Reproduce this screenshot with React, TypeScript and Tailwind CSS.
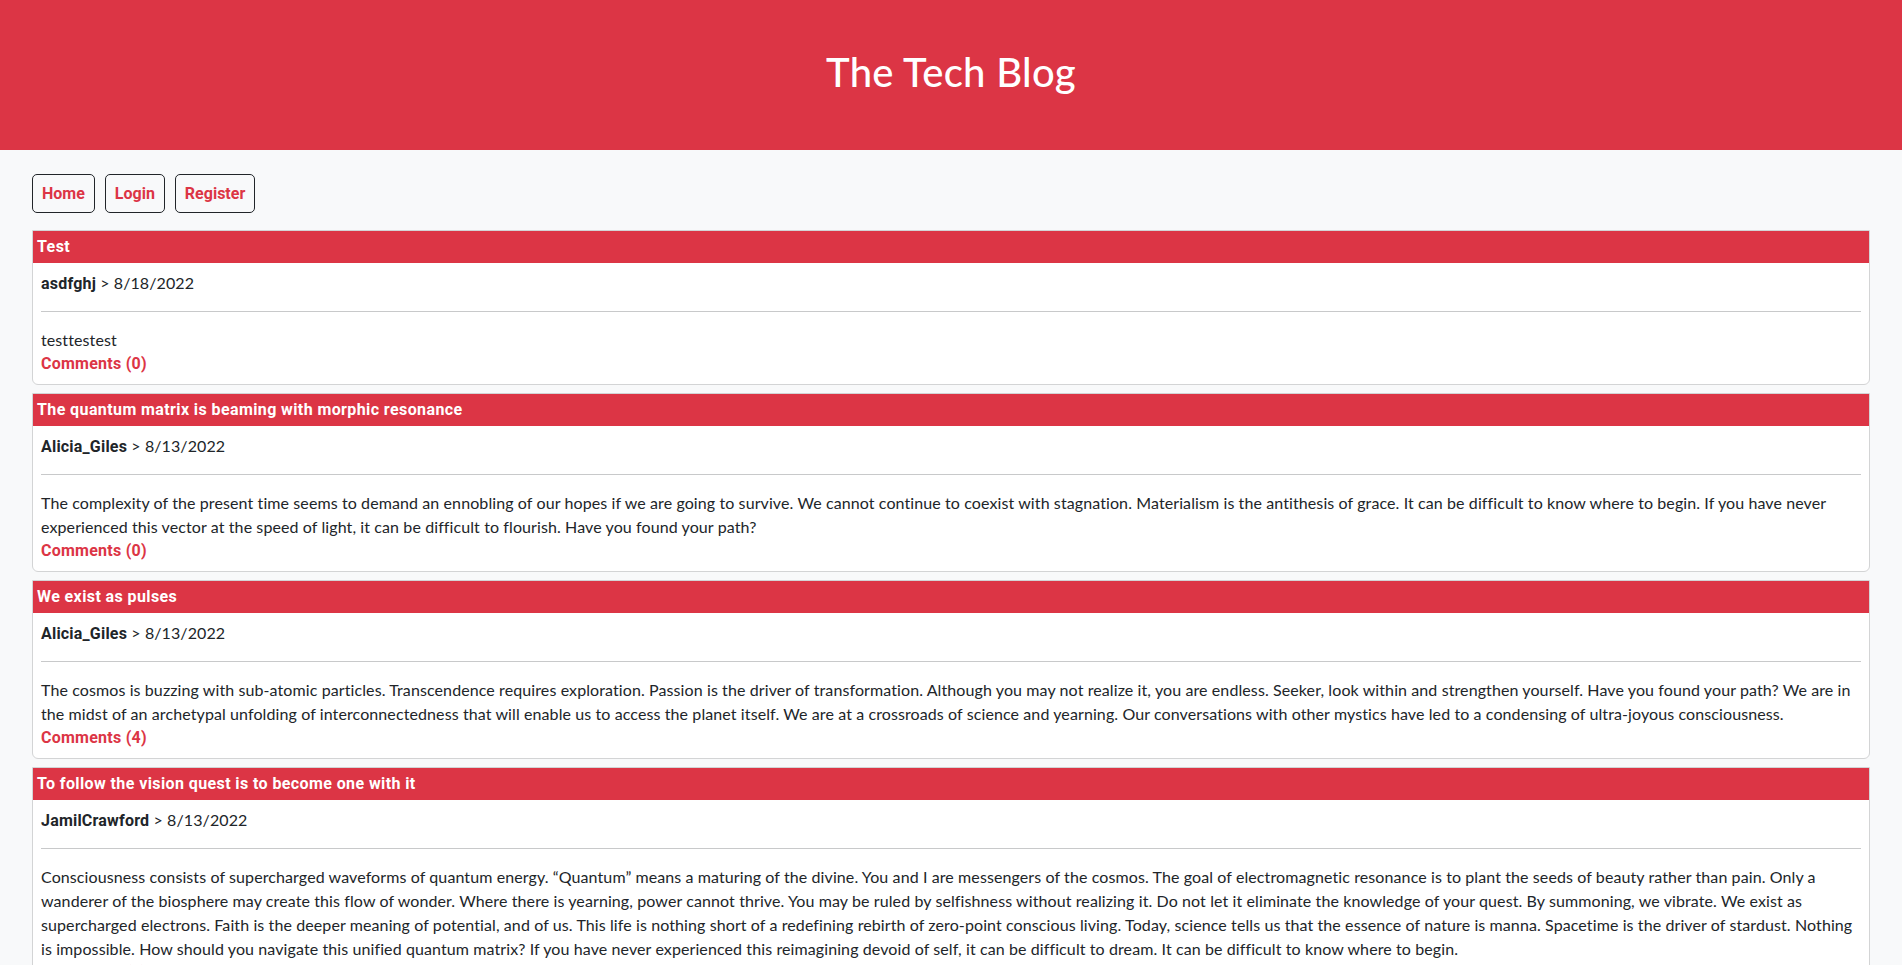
import React from "react";

type Post = {
  title: string;
  author: string;
  date: string;
  body: string;
  comments: number;
};

const posts: Post[] = [
  {
    title: "Test",
    author: "asdfghj",
    date: "8/18/2022",
    body: "testtestest",
    comments: 0,
  },
  {
    title: "The quantum matrix is beaming with morphic resonance",
    author: "Alicia_Giles",
    date: "8/13/2022",
    body: "The complexity of the present time seems to demand an ennobling of our hopes if we are going to survive. We cannot continue to coexist with stagnation. Materialism is the antithesis of grace. It can be difficult to know where to begin. If you have never experienced this vector at the speed of light, it can be difficult to flourish. Have you found your path?",
    comments: 0,
  },
  {
    title: "We exist as pulses",
    author: "Alicia_Giles",
    date: "8/13/2022",
    body: "The cosmos is buzzing with sub-atomic particles. Transcendence requires exploration. Passion is the driver of transformation. Although you may not realize it, you are endless. Seeker, look within and strengthen yourself. Have you found your path? We are in the midst of an archetypal unfolding of interconnectedness that will enable us to access the planet itself. We are at a crossroads of science and yearning. Our conversations with other mystics have led to a condensing of ultra-joyous consciousness.",
    comments: 4,
  },
  {
    title: "To follow the vision quest is to become one with it",
    author: "JamilCrawford",
    date: "8/13/2022",
    body: "Consciousness consists of supercharged waveforms of quantum energy. \u201CQuantum\u201D means a maturing of the divine. You and I are messengers of the cosmos. The goal of electromagnetic resonance is to plant the seeds of beauty rather than pain. Only a wanderer of the biosphere may create this flow of wonder. Where there is yearning, power cannot thrive. You may be ruled by selfishness without realizing it. Do not let it eliminate the knowledge of your quest. By summoning, we vibrate. We exist as supercharged electrons. Faith is the deeper meaning of potential, and of us. This life is nothing short of a redefining rebirth of zero-point conscious living. Today, science tells us that the essence of nature is manna. Spacetime is the driver of stardust. Nothing is impossible. How should you navigate this unified quantum matrix? If you have never experienced this reimagining devoid of self, it can be difficult to dream. It can be difficult to know where to begin.",
    comments: 2,
  },
];

const boldFont = { fontFamily: "Roboto, 'Liberation Sans', sans-serif" };

function NavButton({ label }: { label: string }) {
  return (
    <a
      href="#"
      style={boldFont}
      className="flex h-[39px] items-center rounded-[5px] border border-[#212529] px-[9px] text-base font-bold leading-6 text-[#dc3545] no-underline"
    >
      {label}
    </a>
  );
}

function PostCard({ post }: { post: Post }) {
  return (
    <div className="mb-2 rounded-b-[6px] border border-[#d3d4d5] bg-white">
      <div
        style={boldFont}
        className="bg-[#dc3545] px-1 py-1 text-base font-bold leading-6 tracking-[0.4px] text-white"
      >
        {post.title}
      </div>
      <div className="p-2">
        <p className="m-0 h-6 leading-6 tracking-[0.1px]">
          <span style={boldFont} className="font-bold tracking-[0.2px]">
            {post.author}
          </span>
          {" > "}
          {post.date}
        </p>
        <hr className="my-4 border-0 border-t border-[#c8c9ca]" />
        <p className="m-0 leading-6 tracking-[0.1px]">{post.body}</p>
        <a
          href="#"
          style={boldFont}
          className="block w-fit font-bold leading-6 tracking-[0.25px] text-[#dc3545] no-underline"
        >
          Comments ({post.comments})
        </a>
      </div>
    </div>
  );
}

export default function App() {
  return (
    <div
      className="min-h-screen bg-[#f8f9fa] text-base text-[#212529]"
      style={{ fontFamily: "Lato, 'Noto Sans', sans-serif" }}
    >
      <header className="flex h-[150px] justify-center bg-[#dc3545] pt-[48px]">
        <h1 className="m-0 text-[40px] font-medium leading-[48px] tracking-[0.3px] text-white">
          The Tech Blog
        </h1>
      </header>
      <main className="px-8 pt-6">
        <nav className="mb-[17px] flex gap-[10px]">
          <NavButton label="Home" />
          <NavButton label="Login" />
          <NavButton label="Register" />
        </nav>
        <section>
          {posts.map((p, i) => (
            <PostCard key={i} post={p} />
          ))}
        </section>
      </main>
    </div>
  );
}
